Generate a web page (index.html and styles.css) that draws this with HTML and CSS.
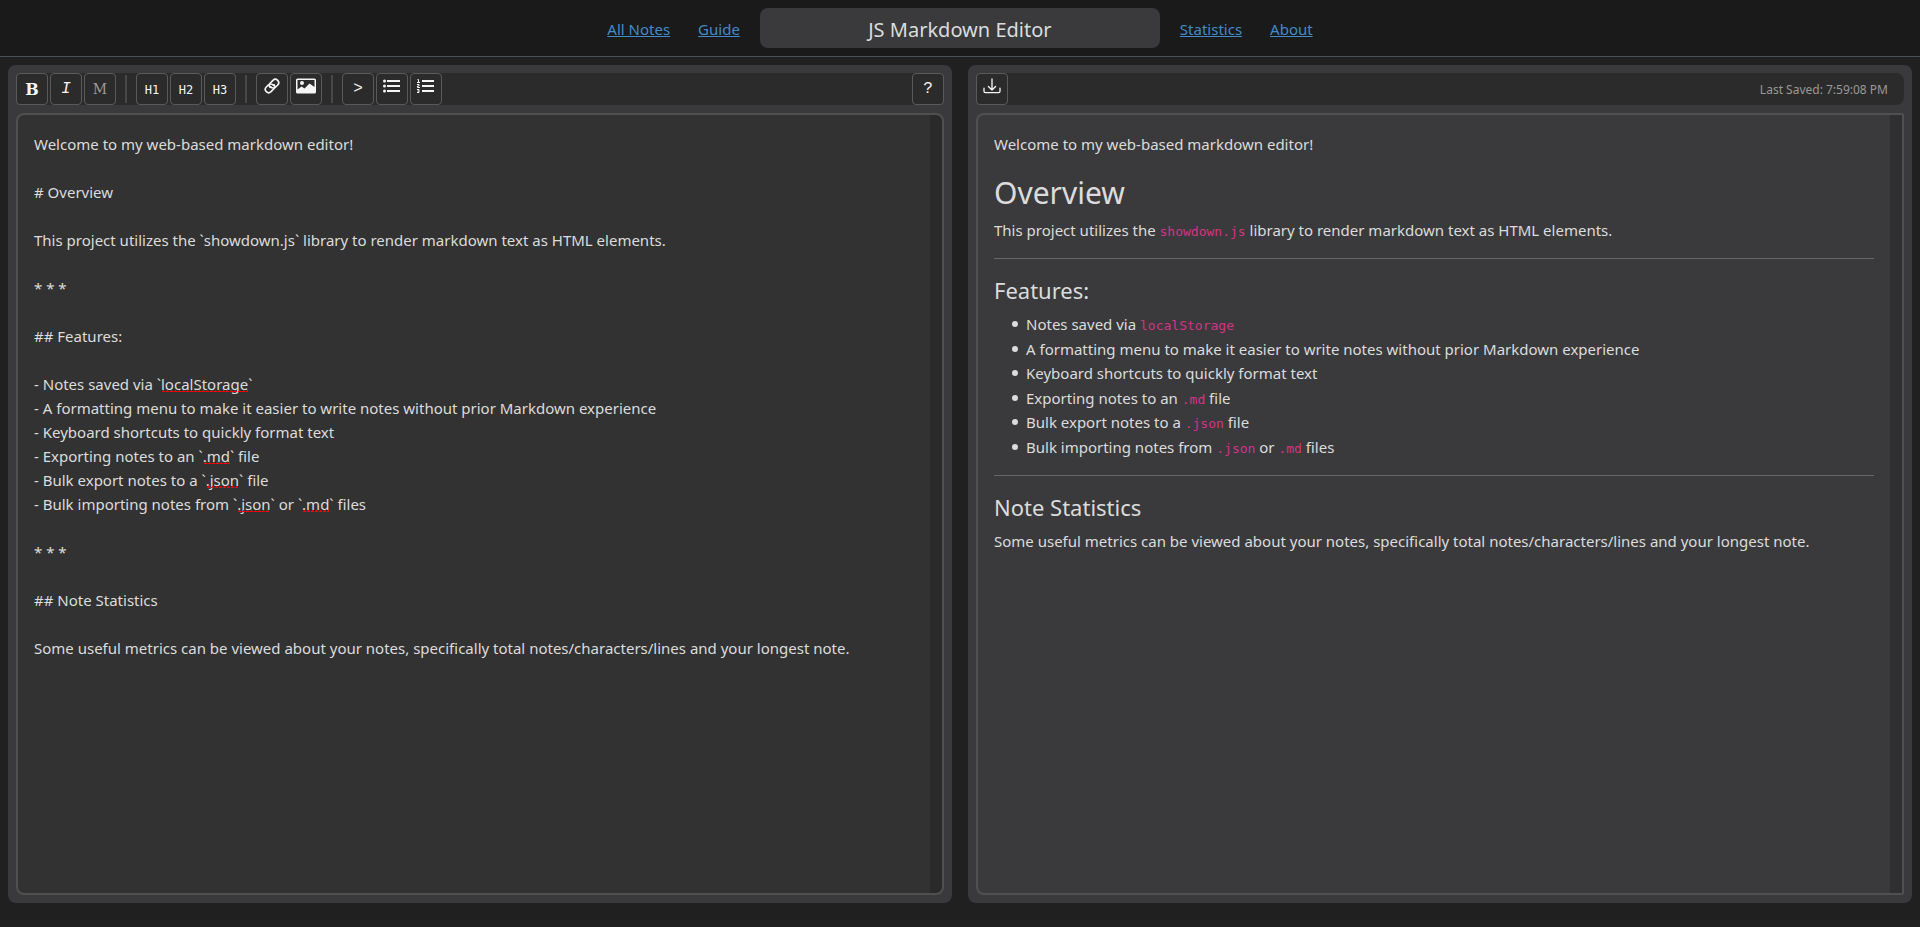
FILE: index.html
```html
<!DOCTYPE html>
<html lang="en">
<head>
<meta charset="utf-8">
<title>JS Markdown Editor</title>
<link rel="stylesheet" href="styles.css">
</head>
<body>
<header class="header">
  <nav class="nav">
    <a href="#notes">All Notes</a>
    <a href="#guide">Guide</a>
  </nav>
  <input class="title" type="text" value="JS Markdown Editor" aria-label="Note title">
  <nav class="nav">
    <a href="#statistics">Statistics</a>
    <a href="#about">About</a>
  </nav>
</header>
<main class="workspace">
  <section class="panel" aria-label="Editor">
    <div class="toolbar">
      <button class="tool bold" type="button" aria-label="Bold">B</button>
      <button class="tool italic" type="button" aria-label="Italic">I</button>
      <button class="tool mono" type="button" aria-label="Monospace">M</button>
      <span class="separator"></span>
      <button class="tool heading" type="button">H1</button>
      <button class="tool heading" type="button">H2</button>
      <button class="tool heading" type="button">H3</button>
      <span class="separator"></span>
      <button class="tool" type="button" aria-label="Link">
        <svg class="icon" viewBox="0 0 24 24" fill="none" stroke="currentColor" stroke-width="2.5" stroke-linecap="round"><path d="M10 13a5 5 0 0 0 7.540.540l3-3a5 5 0 0 0-7.070-7.070l-4 4a5 5 0 0 0-.5 6.500"/><path d="M14 11a5 5 0 0 0-7.540-.540l-3 3a5 5 0 0 0 7.070 7.070l4-4a5 5 0 0 0 .5-6.500"/></svg>
      </button>
      <button class="tool" type="button" aria-label="Image">
        <svg class="icon wide" viewBox="0 0 20 16"><path fill="currentColor" fill-rule="evenodd" d="M1.500 0.500h17a1.500 1.500 0 0 1 1.500 1.500v12a1.500 1.500 0 0 1-1.500 1.500h-17A1.500 1.500 0 0 1 0 14V2A1.500 1.500 0 0 1 1.500.500zM1.500 2v9.500l4-3 3 2 5-5 5 3.500V2zM6 3a2 2 0 1 1 0 4 2 2 0 0 1 0-4z"/></svg>
      </button>
      <span class="separator"></span>
      <button class="tool" type="button" aria-label="Quote">&gt;</button>
      <button class="tool" type="button" aria-label="Bulleted list">
        <svg class="icon wide" viewBox="0 0 20 16" fill="currentColor"><path d="M5 2h13v2H5zM5 7h13v2H5zM5 12h13v2H5z"/><circle cx="2.500" cy="3" r="1.500"/><circle cx="2.500" cy="8" r="1.500"/><circle cx="2.500" cy="13" r="1.500"/></svg>
      </button>
      <button class="tool" type="button" aria-label="Numbered list">
        <svg class="icon wide" viewBox="0 0 20 16" fill="currentColor"><path d="M6 2h12v2H6zM6 7h12v2H6zM6 12h12v2H6z"/><path fill="none" stroke="currentColor" d="M1.500 1.500h1v3M1 4.500h3M1 6.500h2v1.500H1.500v1.500H4M1 11.500h2v3H1M1.500 13H3"/></svg>
      </button>
      <button class="tool help" type="button" aria-label="Help">?</button>
    </div>
    <div class="editor">
      <div class="spelling" aria-hidden="true"></div>
      <textarea class="source" aria-label="Markdown source" spellcheck="false">Welcome to my web-based markdown editor!

# Overview

This project utilizes the `showdown.js` library to render markdown text as HTML elements.

* * *

## Features:

- Notes saved via `localStorage`
- A formatting menu to make it easier to write notes without prior Markdown experience
- Keyboard shortcuts to quickly format text
- Exporting notes to an `.md` file
- Bulk export notes to a `.json` file
- Bulk importing notes from `.json` or `.md` files

* * *

## Note Statistics

Some useful metrics can be viewed about your notes, specifically total notes/characters/lines and your longest note.</textarea>
    </div>
  </section>
  <section class="panel" aria-label="Preview">
    <div class="toolbar">
      <button class="tool" type="button" aria-label="Download">
        <svg class="icon wide" viewBox="0 0 20 18" fill="none" stroke="currentColor" stroke-width="1.500" stroke-linecap="round" stroke-linejoin="round"><path d="M10 1v12M6 9.500l4 4 4-4M1 11.500V15a1.500 1.500 0 0 0 1.500 1.500h15A1.500 1.500 0 0 0 19 15v-3.500"/></svg>
      </button>
      <span class="saved">Last Saved: 7:59:08 PM</span>
    </div>
    <article class="preview">
      <p>Welcome to my web-based markdown editor!</p>
      <h1>Overview</h1>
      <p>This project utilizes the <code>showdown.js</code> library to render markdown text as HTML elements.</p>
      <hr>
      <h2>Features:</h2>
      <ul>
        <li>Notes saved via <code>localStorage</code></li>
        <li>A formatting menu to make it easier to write notes without prior Markdown experience</li>
        <li>Keyboard shortcuts to quickly format text</li>
        <li>Exporting notes to an <code>.md</code> file</li>
        <li>Bulk export notes to a <code>.json</code> file</li>
        <li>Bulk importing notes from <code>.json</code> or <code>.md</code> files</li>
      </ul>
      <hr>
      <h2>Note Statistics</h2>
      <p>Some useful metrics can be viewed about your notes, specifically total notes/characters/lines and your longest note.</p>
    </article>
  </section>
</main>
<script src="spelling.js"></script>
</body>
</html>
```

FILE: spelling.js
```js
// Measures where unknown words fall in the textarea, then underlines them.
const source = document.querySelector(".source");
const layer = document.querySelector(".spelling");
const unknown = /(localStorage|\.md|\.json)/;

function mark() {
  layer.replaceChildren();
  source.value.split(unknown).forEach((part, i) => {
    const node = document.createElement(i % 2 ? "u" : "span");
    node.textContent = part;
    layer.append(node);
  });
  const origin = layer.getBoundingClientRect();
  const marks = [...layer.querySelectorAll("u")].map((word) => {
    const box = word.getBoundingClientRect();
    const line = document.createElement("i");
    line.className = "squiggle";
    line.style.left = `${Math.round(box.left - origin.left)}px`;
    line.style.top = `${Math.round(box.bottom - origin.top - source.scrollTop)}px`;
    line.style.width = `${Math.round(box.width)}px`;
    return line;
  });
  layer.replaceChildren(...marks);
}

source.addEventListener("input", mark);
source.addEventListener("scroll", mark);
window.addEventListener("resize", mark);
mark();
```

FILE: styles.css
```css
* {
  box-sizing: border-box;
}

body {
  display: flex;
  flex-direction: column;
  height: 100vh;
  margin: 0;
  background: #202020;
  color: #dcdcdc;
  font: 15px/24px "Segoe UI", "Noto Sans", sans-serif;
}

.header {
  display: flex;
  align-items: center;
  justify-content: center;
  gap: 20px;
  padding: 8px;
  background: #1a1a1a;
  border-bottom: 1px solid #495057;
}

.nav {
  display: flex;
  gap: 28px;
  padding-top: 2px;
}

.nav a {
  color: #428bca;
}

.title {
  width: 400px;
  height: 40px;
  padding: 2px 0 0;
  border: 0;
  border-radius: 8px;
  background: #3a3a3c;
  color: inherit;
  font: inherit;
  font-size: 20px;
  text-align: center;
}

.workspace {
  flex: 1;
  display: grid;
  grid-template-columns: 1fr 1fr;
  gap: 16px;
  min-height: 0;
  padding: 8px 8px 24px;
}

.panel {
  display: flex;
  flex-direction: column;
  gap: 8px;
  min-width: 0;
  min-height: 0;
  padding: 8px;
  border-radius: 8px;
  background: #3a3a3c;
}

.toolbar {
  display: flex;
  align-items: center;
  gap: 2px;
  border-radius: 8px;
  background: #2b2b2b;
}

.tool {
  display: flex;
  justify-content: center;
  align-items: center;
  width: 32px;
  height: 32px;
  padding: 0;
  border: 1px solid #5a5a5a;
  border-radius: 4px;
  background: #2b2b2b;
  color: #f5f5f5;
  font: 16px "Liberation Mono", monospace;
}

.bold {
  font-family: "DejaVu Serif", serif;
  font-weight: 700;
}

.italic {
  font-style: italic;
}

.mono {
  color: #999;
  font-family: "DejaVu Serif", serif;
  font-size: 14px;
}

.heading {
  padding-top: 2px;
  font: 12px "DejaVu Sans Mono", monospace;
}

.separator {
  width: 2px;
  height: 28px;
  margin: 0 7px;
  background: #484848;
}

.help {
  margin-left: auto;
}

.icon {
  width: 16px;
  height: 16px;
  margin-bottom: 6px;
}

.wide {
  width: 20px;
}

.saved {
  margin-left: auto;
  padding: 2px 16px 0 0;
  color: #999;
  font-size: 12px;
}

.editor {
  flex: 1;
  display: grid;
  min-height: 0;
  overflow: hidden;
  border: 2px solid #505050;
  border-radius: 8px;
  background: linear-gradient(#2a2a2a, #2a2a2a) right / 12px 100% no-repeat #323232;
}

.source,
.spelling {
  grid-area: 1 / 1;
  margin: 0;
  padding: 17px 28px 16px 16px;
  border: 0;
  font: inherit;
  white-space: pre-wrap;
}

.source {
  background: transparent;
  color: inherit;
  outline: 0;
  resize: none;
  overflow: auto;
}

.spelling {
  position: relative;
  overflow: hidden;
}

.squiggle {
  position: absolute;
  height: 3px;
  margin-top: -4px;
  background:
    conic-gradient(from 135deg at 50% 0, #f00 90deg, transparent 0) 0 0 / 4px 2px repeat-x;
  -webkit-mask: linear-gradient(#000, #000);
}

.preview {
  flex: 1;
  min-height: 0;
  padding: 17px 28px 16px 16px;
  overflow: auto;
  border: 2px solid #505052;
  border-radius: 8px 2px 2px 8px;
  background: linear-gradient(#2f2f31, #2f2f31) right / 12px 100% no-repeat;
}

.preview p,
.preview ul {
  margin: 0 0 16px;
}

.preview ul {
  padding-left: 32px;
  list-style: none;
}

.preview li {
  position: relative;
}

.preview li::before {
  content: "";
  position: absolute;
  top: 9px;
  left: -14px;
  width: 6px;
  height: 6px;
  border-radius: 50%;
  background: currentColor;
}

.preview li:nth-child(odd) {
  margin-bottom: 1px;
}

.preview h1,
.preview h2 {
  font-weight: 400;
}

.preview h1 {
  margin: 0 0 4px;
  font-size: 30px;
  line-height: 42px;
}

.preview h2 {
  margin: 0 0 6px;
  font-size: 22px;
  line-height: 31px;
}

.preview hr {
  margin: 16px 0;
  border: 0;
  border-top: 1px solid #666;
}

.preview code {
  color: #d63384;
  font: 13px "DejaVu Sans Mono", monospace;
}
```
